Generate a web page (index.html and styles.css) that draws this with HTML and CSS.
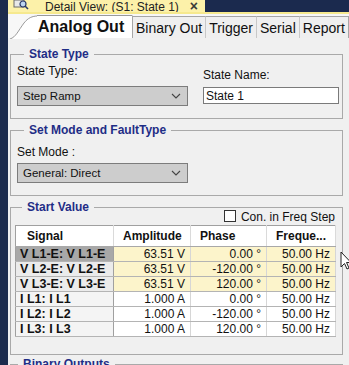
FILE: index.html
```html
<!DOCTYPE html>
<html>
  <head>
    <link rel="stylesheet" href="styles.css">
  </head>
  <body>
    <div class="window">
      <div class="side"></div>
      <div class="main">
        <div class="doc-bar">
          <div class="doc-tab">
            <svg class="doc-icon" viewBox="0 0 16 10" width="16" height="10">
              <rect x="1" y="0" width="10" height="7" fill="#e8e8e8" stroke="#6a6a6a"></rect>
              <circle cx="10" cy="4" r="3" fill="#bcd4f0" stroke="#2a3a6a" stroke-width="1.2"></circle>
              <line x1="12" y1="6" x2="15" y2="9" stroke="#2a3a6a" stroke-width="1.6"></line>
            </svg>
            <span class="doc-title">Detail View: (S1: State 1)</span>
            <span class="doc-close">×</span>
          </div>
        </div>
        <div class="doc-line"></div>

        <div class="tabs">
          <div class="tab active">
            <svg class="tab-slant" viewBox="0 0 28 24" width="28" height="24" preserveAspectRatio="none">
              <path d="M0 24 C6 22 8 16 14 8 C18 3 22 1 28 1 L28 24 Z" fill="#fff"></path>
              <path d="M0 24 C6 22 8 16 14 8 C18 3 22 1 28 1" fill="none" stroke="#9a9a9a"></path>
            </svg>
            <span>Analog Out</span>
          </div>
          <div class="tab">Binary Out</div>
          <div class="tab">Trigger</div>
          <div class="tab">Serial</div>
          <div class="tab">Report</div>
        </div>

        <div class="panel">
          <fieldset class="group group-state">
            <legend>State Type</legend>
            <div class="row">
              <div class="field field-type">
                <label>State Type:</label>
                <div class="select">
                  <span>Step Ramp</span>
                  <svg class="chev" viewBox="0 0 10 6" width="10" height="6"><polyline points="1 1 5 5 9 1" fill="none" stroke="#444" stroke-width="1.1"></polyline></svg>
                </div>
              </div>
              <div class="field field-name">
                <label>State Name:</label>
                <div class="input">State 1</div>
              </div>
            </div>
          </fieldset>

          <fieldset class="group group-mode">
            <legend>Set Mode and FaultType</legend>
            <div class="field field-type">
              <label>Set Mode :</label>
              <div class="select">
                <span>General: Direct</span>
                <svg class="chev" viewBox="0 0 10 6" width="10" height="6"><polyline points="1 1 5 5 9 1" fill="none" stroke="#444" stroke-width="1.1"></polyline></svg>
              </div>
            </div>
          </fieldset>

          <fieldset class="group group-start">
            <legend>Start Value</legend>
            <div class="check-row">
              <span class="box"></span>
              <span>Con. in Freq Step</span>
            </div>
            <table class="grid">
              <thead>
                <tr>
                  <th class="c-sig">Signal</th>
                  <th class="c-amp">Amplitude</th>
                  <th class="c-ph">Phase</th>
                  <th class="c-fr">Freque...</th>
                </tr>
              </thead>
              <tbody>
                <tr class="volt sel">
                  <td class="sig">V L1-E: V L1-E</td><td>63.51 V</td><td>0.00 °</td><td>50.00 Hz</td>
                </tr>
                <tr class="volt">
                  <td class="sig">V L2-E: V L2-E</td><td>63.51 V</td><td>-120.00 °</td><td>50.00 Hz</td>
                </tr>
                <tr class="volt">
                  <td class="sig">V L3-E: V L3-E</td><td>63.51 V</td><td>120.00 °</td><td>50.00 Hz</td>
                </tr>
                <tr class="curr">
                  <td class="sig">I L1: I L1</td><td>1.000 A</td><td>0.00 °</td><td>50.00 Hz</td>
                </tr>
                <tr class="curr">
                  <td class="sig">I L2: I L2</td><td>1.000 A</td><td>-120.00 °</td><td>50.00 Hz</td>
                </tr>
                <tr class="curr">
                  <td class="sig">I L3: I L3</td><td>1.000 A</td><td>120.00 °</td><td>50.00 Hz</td>
                </tr>
              </tbody>
            </table>
          </fieldset>

          <fieldset class="group group-binary">
            <legend>Binary Outputs</legend>
          </fieldset>
        </div>
      </div>

      <svg class="cursor" viewBox="0 0 12 20" width="12" height="20">
        <path d="M1 1 L1 16 L4.5 12.5 L7 18 L9 17 L6.5 11.5 L11 11.5 Z" fill="#fff" stroke="#222" stroke-width="1"></path>
      </svg>
    </div>
  </body>
</html>
```

FILE: styles.css
```css
* {
  margin: 0;
  padding: 0;
  box-sizing: border-box;
}

body {
  width: 349px;
  height: 365px;
  overflow: hidden;
  background: #1c2b4d;
  font-family: "Liberation Sans", Arial, sans-serif;
  font-size: 12px;
  color: #111;
}

.window {
  position: relative;
  display: flex;
  height: 365px;
  overflow: hidden;
}

.side {
  width: 8px;
  flex: none;
  background: #1c2b4d;
}

.main {
  flex: 1;
  display: flex;
  flex-direction: column;
  min-width: 0;
  overflow: hidden;
}

.doc-bar {
  flex: none;
  height: 12px;
  display: flex;
  background: #1b2a4e;
  overflow: hidden;
}

.doc-tab {
  width: 197px;
  display: flex;
  align-items: flex-end;
  background: #fcf1a9;
  padding: 0 0 1px 5px;
}

.doc-icon {
  margin-bottom: 1px;
}

.doc-title {
  margin-left: 16px;
  line-height: 12px;
  margin-bottom: -2px;
  color: #222;
}

.doc-close {
  margin-left: auto;
  margin-right: 7px;
  font-weight: bold;
  font-size: 14px;
  line-height: 12px;
  margin-bottom: -1px;
  color: #3a3a3a;
}

.doc-line {
  flex: none;
  height: 2px;
  background: #f6e98e;
}

.tabs {
  flex: none;
  height: 24px;
  display: flex;
  align-items: flex-end;
  background: #f7f7f7;
  padding-left: 2px;
}

.tab {
  height: 22px;
  padding: 0 3px;
  display: flex;
  align-items: center;
  border: 1px solid #a6a6a6;
  border-bottom: none;
  border-left-color: #c8c8c8;
  background: #efefef;
  font-size: 14px;
  line-height: 16px;
  color: #111;
  white-space: nowrap;
}

.tab + .tab {
  margin-left: -1px;
}

.tab.active {
  position: relative;
  height: 23px;
  width: 123px;
  padding-left: 28px;
  border-left: none;
  border-right-color: #a6a6a6;
  border-top-color: transparent;
  background: transparent;
  font-weight: bold;
  font-size: 16px;
  z-index: 1;
}

.tab.active span {
  position: relative;
  z-index: 1;
}

.tab.active::after {
  content: "";
  position: absolute;
  left: 27px;
  right: 0;
  top: -1px;
  bottom: 0;
  background: #fff;
  border-top: 1px solid #9a9a9a;
}

.tab-slant {
  position: absolute;
  left: 0;
  top: -1px;
}

.panel {
  flex: 1;
  background: #f0f0f0;
  padding: 9px 6px 0 2px;
  display: flex;
  flex-direction: column;
  overflow: hidden;
}

.group {
  flex: none;
  border: 1px solid #a9a9a9;
  border-radius: 0;
  min-width: 0;
}

.group legend {
  margin-left: 7px;
  padding: 0 5px;
  font-weight: bold;
  font-size: 12px;
  line-height: 14px;
  color: #1f2d86;
}

.group-state {
  padding: 3px 3px 12px 6px;
}

.row {
  display: flex;
  gap: 15px;
}

.field {
  display: flex;
  flex-direction: column;
}

.field label {
  line-height: 14px;
  margin-bottom: 8px;
}

.field-type {
  width: 171px;
}

.field-name {
  flex: 1;
  padding-top: 4px;
}

.field-name label {
  margin-bottom: 5px;
}

.select {
  height: 20px;
  display: flex;
  align-items: center;
  justify-content: space-between;
  padding: 0 6px 0 5px;
  background: #cdcdcd;
  border: 1px solid #7c7c7c;
  font-size: 11.5px;
}

.input {
  height: 17px;
  display: flex;
  align-items: center;
  padding-left: 2px;
  background: #fff;
  border: 1px solid #7a7a7a;
}

.group-mode {
  margin-top: 4px;
  padding: 8px 3px 12px 6px;
}

.group-mode label {
  margin-bottom: 4px;
}

.group-start {
  margin-top: 4px;
  padding: 0 5px 17px 4px;
}

.check-row {
  margin-top: -4px;
  height: 13px;
  overflow: hidden;
  display: flex;
  justify-content: flex-end;
  align-items: flex-start;
  gap: 5px;
  padding-right: 2px;
  line-height: 14px;
}

.box {
  width: 12px;
  height: 12px;
  background: #fff;
  border: 1px solid #333;
}

.grid {
  margin-top: 2px;
  width: 321px;
  border-collapse: collapse;
  table-layout: fixed;
  border: 1px solid #a0a0a0;
  background: #fff;
}

.grid th {
  height: 21px;
  text-align: left;
  padding-left: 9px;
  font-size: 12px;
  font-weight: bold;
  border-right: 1px solid #dadada;
  border-bottom: 1px solid #a8a8a8;
  background: #fff;
}

.grid .c-sig {
  width: 98px;
  padding-left: 11px;
}

.grid .c-amp {
  width: 77px;
}

.grid .c-ph {
  width: 76px;
}

.grid td {
  height: 15px;
  padding: 0 5px 0 0;
  text-align: right;
  font-size: 12px;
  line-height: 13px;
  border-right: 1px solid #d6d6d6;
  border-bottom: 1px solid #b4b4b4;
  white-space: nowrap;
}

.grid td.sig {
  text-align: left;
  padding-left: 4px;
  font-weight: bold;
  font-size: 12.5px;
  border-right-color: #a0a0a0;
}

.volt td {
  background: #fcf4cb;
}

.volt td.sig {
  background: #ebebeb;
}

.volt.sel td.sig {
  background: #a8a8a8;
}

.curr td {
  background: #fff;
}

.curr td.sig {
  background: #f4f4f4;
}

.group-binary {
  margin-top: 2px;
  height: 20px;
}

.cursor {
  position: absolute;
  left: 340px;
  top: 251px;
}
```
